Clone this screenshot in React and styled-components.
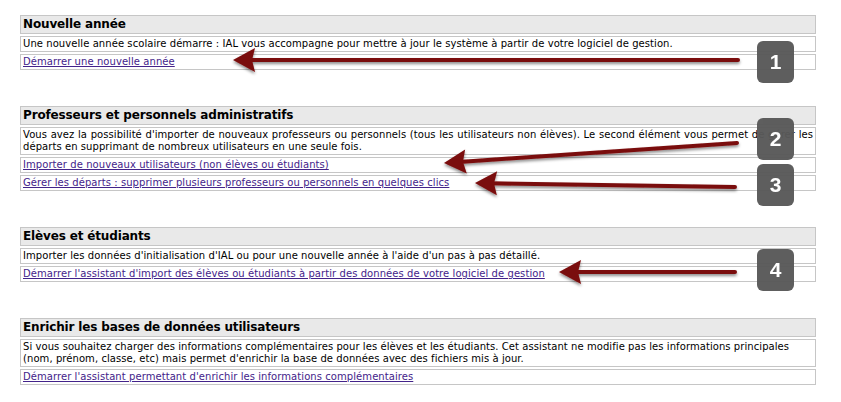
import React from "react";
import styled, { createGlobalStyle } from "styled-components";

const GlobalStyle = createGlobalStyle`
  html, body {
    margin: 0;
    padding: 0;
    background: #ffffff;
  }
  body {
    font-family: "DejaVu Sans", Verdana, sans-serif;
    color: #000;
  }
`;

const Page = styled.div`
  position: relative;
  width: 841px;
  height: 402px;
  overflow: hidden;
  padding: 15px 0 0 20px;
  box-sizing: border-box;
`;

const Section = styled.div`
  width: 796px;
  display: flex;
  flex-direction: column;
  gap: 2px;
  margin-bottom: 36px;
`;

const Header = styled.div`
  height: 19px;
  box-sizing: border-box;
  border: 1px solid #c6c6c6;
  background: #e9e9e9;
  padding: 0 2px;
  font-weight: bold;
  font-size: 12px;
  line-height: 17px;
  letter-spacing: -0.15px;
`;

const Cell = styled.div`
  box-sizing: border-box;
  border: 1px solid #c6c6c6;
  padding: 1px 2px;
  font-size: 10px;
  line-height: 12px;
  letter-spacing: 0.07px;
  white-space: nowrap;
`;

const Line = styled.span`
  display: block;
  text-align: ${({ $justify }) => ($justify ? "justify" : "left")};
  text-align-last: ${({ $justify }) => ($justify ? "justify" : "auto")};
`;

const Link = styled.a`
  color: #43238a;
  text-decoration: underline;
  cursor: pointer;
`;

const Overlay = styled.svg`
  position: absolute;
  left: 0;
  top: 0;
  width: 841px;
  height: 402px;
  pointer-events: none;
`;

const Badge = styled.div`
  position: absolute;
  left: 757px;
  top: ${({ $top }) => $top}px;
  width: 37px;
  height: 42px;
  border-radius: 6px;
  background: #595959;
  color: #fff;
  display: flex;
  align-items: center;
  justify-content: center;
  font-family: "Liberation Sans", Arial, sans-serif;
  font-weight: bold;
  font-size: 21px;
  opacity: 0.97;
`;

const arrows = [
  { tip: [233, 60], tail: [738, 60] },
  { tip: [444, 163], tail: [737, 143] },
  { tip: [475, 183], tail: [735, 187] },
  { tip: [559, 272], tail: [735, 272] },
];

const Arrow = ({ tip, tail }) => {
  const dx = tail[0] - tip[0];
  const dy = tail[1] - tip[1];
  const len = Math.hypot(dx, dy);
  const ux = dx / len;
  const uy = dy / len;
  const hl = 22;
  const hw = 12;
  const bx = tip[0] + ux * hl;
  const by = tip[1] + uy * hl;
  const head = [
    [tip[0], tip[1]],
    [bx - uy * hw, by + ux * hw],
    [tip[0] + ux * (hl - 3), tip[1] + uy * (hl - 3)],
    [bx + uy * hw, by - ux * hw],
  ]
    .map((p) => p.join(","))
    .join(" ");
  return (
    <g filter="url(#shadow)">
      <line
        x1={tip[0] + ux * 15}
        y1={tip[1] + uy * 15}
        x2={tail[0]}
        y2={tail[1]}
        stroke="#7a0b0b"
        strokeWidth="4"
        strokeLinecap="round"
      />
      <polygon points={head} fill="#7a0b0b" />
    </g>
  );
};

const App = () => {
  return (
    <Page>
      <GlobalStyle />
      <Section>
        <Header>Nouvelle année</Header>
        <Cell>
          Une nouvelle année scolaire démarre : IAL vous accompagne pour mettre à jour le
          système à partir de votre logiciel de gestion.
        </Cell>
        <Cell>
          <Link>Démarrer une nouvelle année</Link>
        </Cell>
      </Section>

      <Section style={{ marginTop: 1 }}>
        <Header>Professeurs et personnels administratifs</Header>
        <Cell>
          <Line $justify>
            Vous avez la possibilité d'importer de nouveaux professeurs ou personnels (tous
            les utilisateurs non élèves). Le second élément vous permet de gérer les
          </Line>
          <Line>départs en supprimant de nombreux utilisateurs en une seule fois.</Line>
        </Cell>
        <Cell>
          <Link>Importer de nouveaux utilisateurs (non élèves ou étudiants)</Link>
        </Cell>
        <Cell>
          <Link>Gérer les départs : supprimer plusieurs professeurs ou personnels en quelques clics</Link>
        </Cell>
      </Section>

      <Section>
        <Header>Elèves et étudiants</Header>
        <Cell>
          Importer les données d'initialisation d'IAL ou pour une nouvelle année à l'aide
          d'un pas à pas détaillé.
        </Cell>
        <Cell>
          <Link>
            Démarrer l'assistant d'import des élèves ou étudiants à partir des données de
            votre logiciel de gestion
          </Link>
        </Cell>
      </Section>

      <Section>
        <Header>Enrichir les bases de données utilisateurs</Header>
        <Cell>
          <Line>
            Si vous souhaitez charger des informations complémentaires pour les élèves et
            les étudiants. Cet assistant ne modifie pas les informations principales
          </Line>
          <Line>
            (nom, prénom, classe, etc) mais permet d'enrichir la base de données avec des
            fichiers mis à jour.
          </Line>
        </Cell>
        <Cell>
          <Link>Démarrer l'assistant permettant d'enrichir les informations complémentaires</Link>
        </Cell>
      </Section>

      <Overlay viewBox="0 0 841 402">
        <defs>
          <filter id="shadow" x="-10%" y="-50%" width="120%" height="200%">
            <feDropShadow dx="0" dy="2" stdDeviation="1.5" floodColor="#000" floodOpacity="0.45" />
          </filter>
        </defs>
        {arrows.map((a, i) => (
          <Arrow key={i} tip={a.tip} tail={a.tail} />
        ))}
      </Overlay>

      <Badge $top={41}>1</Badge>
      <Badge $top={118}>2</Badge>
      <Badge $top={164}>3</Badge>
      <Badge $top={249}>4</Badge>
    </Page>
  );
};

export default App;
